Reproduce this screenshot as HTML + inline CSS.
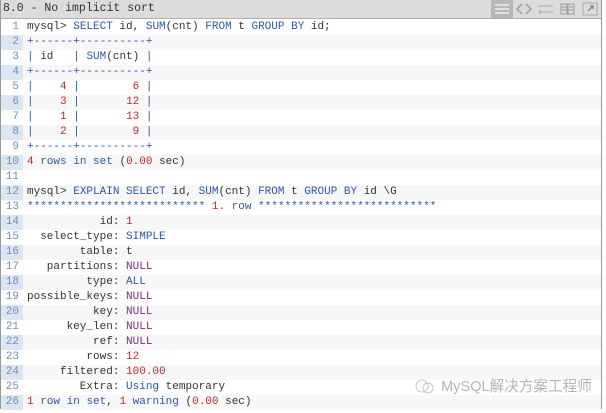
<!DOCTYPE html>
<html><head><meta charset="utf-8"><style>
*{margin:0;padding:0;box-sizing:border-box}
body{width:606px;height:413px;background:#fff;overflow:hidden;font-family:"Liberation Mono","DejaVu Sans Mono",monospace;font-size:11px}
#box{position:absolute;left:0;top:0;width:602px;height:409px;border:1px solid #999;border-top:none;background:#fff}
#title{height:19px;background:#dcdcdc;border-bottom:1px solid #b0b0b0;color:#333;line-height:18px;padding-left:2px;font-size:11.5px;position:relative}
#icons{position:absolute;right:0;top:0;height:18px;display:flex}
.ic{width:22px;height:18px;display:flex;align-items:center;justify-content:center}
#lines{margin-top:1px}
.ln{height:15px;line-height:15px;display:flex;white-space:pre}
.g{width:22px;text-align:right;padding-right:4px;color:#6d8fb3;flex:none}
.c{padding-left:4px;color:#333;flex:1}
.ln:nth-child(even) .g{background:#dbe6f3}
.ln:nth-child(even) .c{background:#f7f7f7}
.k{color:#2b59a8}.n{color:#c0282d}.p{color:#7a2a80}
</style></head><body><div id="box">
<div id="title">8.0 - No implicit sort
<div id="icons">
<div class="ic" style="background:#b8b8b8"><svg width="14" height="10"><path d="M0 1h14M0 5h14M0 9h14" stroke="#eee" stroke-width="1.5"/></svg></div>
<div class="ic"><svg width="16" height="12"><path d="M6 1L1 6l5 5M10 1l5 5-5 5" stroke="#999" fill="none" stroke-width="1.3"/></svg></div>
<div class="ic"><svg width="16" height="10"><path d="M0 2h15M15 8H1M3 6l-2 2 2 2" stroke="#aaa" fill="none"/></svg></div>
<div class="ic"><svg width="16" height="12"><path d="M1 1h6v10H1zM8 1h6v10H8zM2 4h4M2 7h4M9 4h4M9 7h4" stroke="#999" fill="none"/></svg></div>
<div class="ic"><svg width="16" height="14"><path d="M1 1h14v12H1z" stroke="#aaa" fill="none"/><path d="M6 9l5-5M8 4h3v3" stroke="#888" fill="none" stroke-width="1.4"/></svg></div>
</div></div>
<div id="lines">
<div class="ln"><span class="g">1</span><span class="c">mysql&gt; <span class="k">SELECT</span> id, <span class="k">SUM</span>(cnt) <span class="k">FROM</span> t <span class="k">GROUP BY</span> id;</span></div>
<div class="ln"><span class="g">2</span><span class="c"><span class="k">+------+----------+</span></span></div>
<div class="ln"><span class="g">3</span><span class="c"><span class="k">|</span> id   <span class="k">|</span> <span class="k">SUM</span>(cnt) <span class="k">|</span></span></div>
<div class="ln"><span class="g">4</span><span class="c"><span class="k">+------+----------+</span></span></div>
<div class="ln"><span class="g">5</span><span class="c"><span class="k">|</span>    <span class="n">4</span> <span class="k">|</span>        <span class="n">6</span> <span class="k">|</span></span></div>
<div class="ln"><span class="g">6</span><span class="c"><span class="k">|</span>    <span class="n">3</span> <span class="k">|</span>       <span class="n">12</span> <span class="k">|</span></span></div>
<div class="ln"><span class="g">7</span><span class="c"><span class="k">|</span>    <span class="n">1</span> <span class="k">|</span>       <span class="n">13</span> <span class="k">|</span></span></div>
<div class="ln"><span class="g">8</span><span class="c"><span class="k">|</span>    <span class="n">2</span> <span class="k">|</span>        <span class="n">9</span> <span class="k">|</span></span></div>
<div class="ln"><span class="g">9</span><span class="c"><span class="k">+------+----------+</span></span></div>
<div class="ln"><span class="g">10</span><span class="c"><span class="n">4</span> <span class="k">rows in</span> <span class="k">set</span> (<span class="n">0.00</span> sec)</span></div>
<div class="ln"><span class="g">11</span><span class="c"> </span></div>
<div class="ln"><span class="g">12</span><span class="c">mysql&gt; <span class="k">EXPLAIN SELECT</span> id, <span class="k">SUM</span>(cnt) <span class="k">FROM</span> t <span class="k">GROUP BY</span> id \G</span></div>
<div class="ln"><span class="g">13</span><span class="c"><span class="k">***************************</span> <span class="n">1.</span> <span class="k">row ***************************</span></span></div>
<div class="ln"><span class="g">14</span><span class="c">           id: <span class="n">1</span></span></div>
<div class="ln"><span class="g">15</span><span class="c">  select_type: <span class="k">SIMPLE</span></span></div>
<div class="ln"><span class="g">16</span><span class="c">        table: t</span></div>
<div class="ln"><span class="g">17</span><span class="c">   partitions: <span class="p">NULL</span></span></div>
<div class="ln"><span class="g">18</span><span class="c">         type: <span class="k">ALL</span></span></div>
<div class="ln"><span class="g">19</span><span class="c">possible_keys: <span class="p">NULL</span></span></div>
<div class="ln"><span class="g">20</span><span class="c">          key: <span class="p">NULL</span></span></div>
<div class="ln"><span class="g">21</span><span class="c">      key_len: <span class="p">NULL</span></span></div>
<div class="ln"><span class="g">22</span><span class="c">          ref: <span class="p">NULL</span></span></div>
<div class="ln"><span class="g">23</span><span class="c">         rows: <span class="n">12</span></span></div>
<div class="ln"><span class="g">24</span><span class="c">     filtered: <span class="n">100.00</span></span></div>
<div class="ln"><span class="g">25</span><span class="c">        Extra: <span class="k">Using</span> temporary</span></div>
<div class="ln"><span class="g">26</span><span class="c"><span class="n">1</span> <span class="k">row in</span> <span class="k">set</span>, <span class="n">1</span> <span class="k">warning</span> (<span class="n">0.00</span> sec)</span></div>
</div>
<div style="position:absolute;left:414px;top:375px;color:#b5b5b5;font-family:'Liberation Sans','Noto Sans CJK SC',sans-serif;font-size:14.6px;display:flex;align-items:center;gap:6px"><svg width="20" height="16"><circle cx="7" cy="8" r="6" stroke="#c8c8c8" fill="none"/><circle cx="13" cy="10" r="5" stroke="#c8c8c8" fill="none"/></svg>MySQL解决方案工程师</div>
</div></body></html>
